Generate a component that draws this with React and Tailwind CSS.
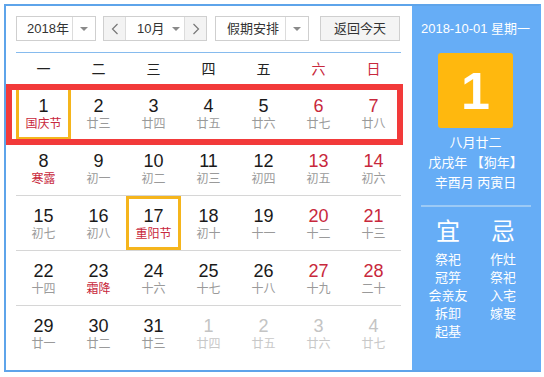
import React from 'react';

const weeks = [
  [
    { d: 1, l: '国庆节', fest: true, today: true },
    { d: 2, l: '廿三' },
    { d: 3, l: '廿四' },
    { d: 4, l: '廿五' },
    { d: 5, l: '廿六' },
    { d: 6, l: '廿七', wk: true },
    { d: 7, l: '廿八', wk: true },
  ],
  [
    { d: 8, l: '寒露', fest: true },
    { d: 9, l: '初一' },
    { d: 10, l: '初二' },
    { d: 11, l: '初三' },
    { d: 12, l: '初四' },
    { d: 13, l: '初五', wk: true },
    { d: 14, l: '初六', wk: true },
  ],
  [
    { d: 15, l: '初七' },
    { d: 16, l: '初八' },
    { d: 17, l: '重阳节', fest: true, today: true },
    { d: 18, l: '初十' },
    { d: 19, l: '十一' },
    { d: 20, l: '十二', wk: true },
    { d: 21, l: '十三', wk: true },
  ],
  [
    { d: 22, l: '十四' },
    { d: 23, l: '霜降', fest: true },
    { d: 24, l: '十六' },
    { d: 25, l: '十七' },
    { d: 26, l: '十八' },
    { d: 27, l: '十九', wk: true },
    { d: 28, l: '二十', wk: true },
  ],
  [
    { d: 29, l: '廿一' },
    { d: 30, l: '廿二' },
    { d: 31, l: '廿三' },
    { d: 1, l: '廿四', other: true },
    { d: 2, l: '廿五', other: true },
    { d: 3, l: '廿六', other: true },
    { d: 4, l: '廿七', other: true },
  ],
];

const Caret = () => (
  <span className="w-0 h-0 border-x-[4px] border-x-transparent border-t-[4px] border-t-[#8a8a8a]"></span>
);

const Chevron = ({ left }) => (
  <svg width="8" height="12" viewBox="0 0 8 12" fill="none" stroke="#777" strokeWidth="1.2">
    <polyline points={left ? '6.5,1 1.5,6 6.5,11' : '1.5,1 6.5,6 1.5,11'} />
  </svg>
);

function Cell({ c }) {
  let numColor = 'text-[#1a1a1a]';
  if (c.wk) numColor = 'text-[#c8283c]';
  if (c.other) numColor = 'text-[#c4c4c4]';
  let lunarColor = 'text-[#9a9a9a]';
  if (c.fest) lunarColor = 'text-[#c8283c]';
  if (c.other) lunarColor = 'text-[#c8c8c8]';
  return (
    <div className={`w-[55px] h-[54px] border-[3px] flex flex-col items-center pt-[7px] ${c.today ? 'border-[#f5b51c]' : 'border-transparent'}`}>
      <div className={`text-[18px] leading-[20px] ${numColor}`}>{c.d}</div>
      <div className={`text-[12px] leading-[16px] ${lunarColor}`}>{c.l}</div>
    </div>
  );
}

export default function App() {
  return (
    <div className="w-[544px] h-[377px] bg-white pt-[4px] pl-[4px] font-['Liberation_Sans','Noto_Sans_CJK_SC',sans-serif]">
      <div className="flex w-[537px] h-[368px] border-2 border-[#5ea4ea] border-r-[#66adf6]">
        {/* calendar */}
        <div className="relative w-[406px] pl-[10px] pt-[10px]">
          <div className="w-[385px] pb-[11px] border-b border-[#86bbee]">
            <div className="flex h-[25px] text-[13px] text-[#333]">
              <div className="flex w-[80px] border border-[#cfcfcf] bg-white">
                <div className="w-[55px] pl-[10px] flex items-center">2018年</div>
                <div className="flex-1 border-l border-[#dcdcdc] flex items-center justify-center"><Caret /></div>
              </div>
              <div className="flex w-[104px] ml-[7px] border border-[#cfcfcf]">
                <div className="w-[22px] bg-[#f3f3f3] border-r border-[#dcdcdc] flex items-center justify-center"><Chevron left /></div>
                <div className="flex-1 bg-white flex items-center pl-[11px] gap-[8px]">10月<Caret /></div>
                <div className="w-[22px] bg-[#f3f3f3] border-l border-[#dcdcdc] flex items-center justify-center"><Chevron /></div>
              </div>
              <div className="flex w-[94px] ml-[8px] border border-[#cfcfcf] bg-white">
                <div className="w-[69px] pl-[11px] flex items-center">假期安排</div>
                <div className="flex-1 border-l border-[#dcdcdc] flex items-center justify-center"><Caret /></div>
              </div>
              <div className="w-[80px] ml-[11px] border border-[#cfcfcf] bg-[#f4f4f4] flex items-center justify-center">返回今天</div>
            </div>
          </div>
          <div className="grid grid-cols-7 w-[385px] h-[33px] items-center text-[14px] text-[#222]">
            {['一', '二', '三', '四', '五', '六', '日'].map((w, i) => (
              <div key={i} className={`text-center ${i > 4 ? 'text-[#c8283c]' : ''}`}>{w}</div>
            ))}
          </div>
          <div className="w-[385px]">
            {weeks.map((row, ri) => (
              <div key={ri} className={`flex ${ri < 4 ? 'border-b border-[#d6d6d6]' : ''}`}>
                {row.map((c, ci) => <Cell key={ci} c={c} />)}
              </div>
            ))}
          </div>
          {/* highlight frame over first week */}
          <div className="absolute left-0 top-[78px] w-[397px] h-[61px] border-[6px] border-[#f23a3a]"></div>
        </div>

        {/* side panel */}
        <div className="flex-1 bg-[#66adf6] flex flex-col items-center text-white pt-[13px]">
          <div className="text-[13px] leading-[20px]">2018-10-01 星期一</div>
          <div className="mt-[14px] w-[75px] h-[75px] rounded-[3px] bg-[#ffb80e] flex items-center justify-center text-[52px] font-bold leading-none">1</div>
          <div className="mt-[5px] text-[13px] leading-[20px] text-center">
            <div>八月廿二</div>
            <div>戊戌年 【狗年】</div>
            <div>辛酉月 丙寅日</div>
          </div>
          <div className="mt-[12px] w-[110px] h-[2px] bg-[#9ccaf6]"></div>
          <div className="flex mt-[12px]">
            <div className="w-[55px] flex flex-col items-center">
              <div className="text-[24px] leading-[26px]">宜</div>
              <div className="mt-[6px] text-[13px] leading-[18px] text-center">
                <div>祭祀</div>
                <div>冠笄</div>
                <div>会亲友</div>
                <div>拆卸</div>
                <div>起基</div>
              </div>
            </div>
            <div className="w-[55px] flex flex-col items-center">
              <div className="text-[24px] leading-[26px]">忌</div>
              <div className="mt-[6px] text-[13px] leading-[18px] text-center">
                <div>作灶</div>
                <div>祭祀</div>
                <div>入宅</div>
                <div>嫁娶</div>
              </div>
            </div>
          </div>
        </div>
      </div>
    </div>
  );
}
